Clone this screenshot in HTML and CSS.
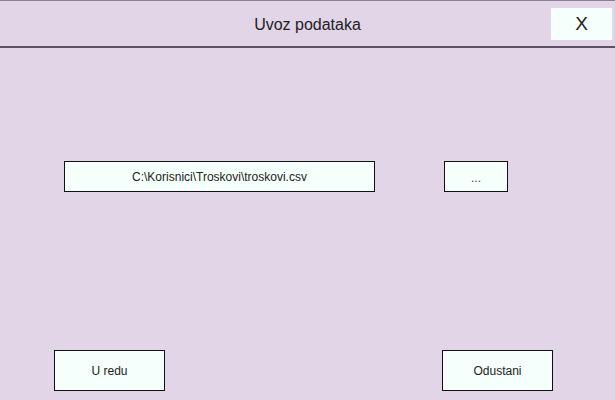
FILE: index.html
```html
<!DOCTYPE html>
<html lang="hr">
<head>
<meta charset="utf-8">
<title>Uvoz podataka</title>
<link rel="stylesheet" href="styles.css">
</head>
<body>
<div class="dialog">
  <header class="titlebar">
    <div class="spacer"></div>
    <div class="title">Uvoz podataka</div>
    <div class="close-wrap"><button class="close">X</button></div>
  </header>
  <main class="content">
    <div class="file-row">
      <div class="path">C:\Korisnici\Troskovi\troskovi.csv</div>
      <button class="btn browse"><span class="dots">...</span></button>
    </div>
    <div class="actions">
      <button class="btn action">U redu</button>
      <button class="btn action">Odustani</button>
    </div>
  </main>
</div>
</body>
</html>
```
FILE: styles.css
```css
html, body {
  margin: 0;
  padding: 0;
  height: 100%;
}
body {
  background: #e1d5e7;
  font-family: "Liberation Sans", Arial, sans-serif;
  color: #222;
}
.dialog {
  height: 400px;
  display: flex;
  flex-direction: column;
  border-top: 1px solid #8a7f93;
  box-sizing: border-box;
}
.titlebar {
  height: 45px;
  border-bottom: 2px solid #5c5166;
  display: grid;
  grid-template-columns: 1fr auto 1fr;
  align-items: center;
  flex: none;
}
.title {
  font-size: 16px;
  color: #222;
  padding-top: 3px;
}
.close-wrap {
  display: flex;
  justify-content: flex-end;
  padding-right: 3px;
}
.close {
  width: 61px;
  height: 32px;
  background: #f5fffb;
  border: none;
  font-family: inherit;
  font-size: 19px;
  color: #222;
  padding: 0;
}
.content {
  flex: 1;
  display: flex;
  flex-direction: column;
  justify-content: space-between;
  padding: 113px 62px 9px 54px;
}
.btn, .path {
  background: #f5fffb;
  border: 1px solid #111;
  box-sizing: border-box;
  font-family: inherit;
  font-size: 12px;
  color: #222;
  padding: 0;
  display: flex;
  align-items: center;
  justify-content: center;
}
.file-row {
  display: flex;
  gap: 69px;
  padding-left: 10px;
}
.path {
  width: 311px;
  height: 31px;
}
.browse {
  width: 64px;
  height: 31px;
}
.dots {
  padding-top: 3px;
  color: #444;
}
.actions {
  display: flex;
  justify-content: space-between;
}
.action {
  width: 111px;
  height: 41px;
}
```
